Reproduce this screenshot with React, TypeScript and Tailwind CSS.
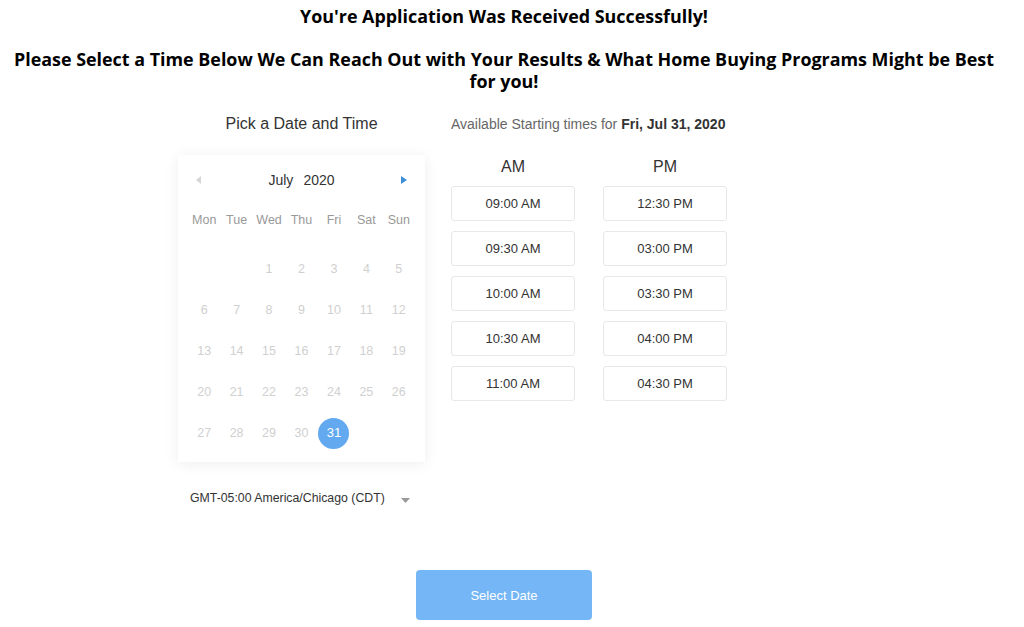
import React from "react";

const weekdays = ["Mon", "Tue", "Wed", "Thu", "Fri", "Sat", "Sun"];
const cells: (number | null)[] = [null, null, ...Array.from({ length: 31 }, (_, i) => i + 1)];
const am = ["09:00 AM", "09:30 AM", "10:00 AM", "10:30 AM", "11:00 AM"];
const pm = ["12:30 PM", "03:00 PM", "03:30 PM", "04:00 PM", "04:30 PM"];

export default function App() {
  const rows: (number | null)[][] = [];
  for (let i = 0; i < cells.length; i += 7) rows.push(cells.slice(i, i + 7));
  return (
    <div className="w-[1024px] h-[627px] bg-white overflow-hidden relative">
      <div
        className="text-center text-black font-bold text-[17.9px] leading-[22px] pr-[16px]"
        style={{ fontFamily: '"Open Sans", sans-serif' }}
      >
        <div className="pt-[5px]">You're Application Was Received Successfully!</div>
        <div className="mt-[21px]">
          Please Select a Time Below We Can Reach Out with Your Results &amp; What Home Buying Programs Might be Best
          <br />
          for you!
        </div>
      </div>

      <div
        className="flex ml-[178px] mt-[21px]"
        style={{ fontFamily: '"Liberation Sans", Arial, sans-serif' }}
      >
        {/* left column */}
        <div className="w-[247px] flex flex-col">
          <div className="text-center text-[16px] leading-[22px] text-[#333]">Pick a Date and Time</div>
          <div className="mt-[20px] h-[307px] bg-white shadow-[0_2px_14px_rgba(0,0,0,0.07)] px-[10px]">
            <div className="flex items-center justify-between h-[22px] mt-[14px] px-[8px]">
              <svg width="6" height="8" viewBox="0 0 6 8">
                <path d="M5 0 L0 4 L5 8 Z" fill="#d6d6d6" />
              </svg>
              <div className="text-[14px] text-[#333]">
                July<span className="ml-[10px]">2020</span>
              </div>
              <svg width="6" height="8" viewBox="0 0 6 8">
                <path d="M0 0 L6 4 L0 8 Z" fill="#3e8ed6" />
              </svg>
            </div>
            <div className="grid grid-cols-7 mt-[20px] text-[12.5px] text-[#999] h-[18px] items-center">
              {weekdays.map((d) => (
                <div key={d} className="text-center">{d}</div>
              ))}
            </div>
            <div className="mt-[24px] flex flex-col gap-[9px]">
              {rows.map((r, ri) => (
                <div key={ri} className="grid grid-cols-7 h-[32px] items-center">
                  {Array.from({ length: 7 }).map((_, ci) => {
                    const v = r[ci];
                    if (v == null) return <div key={ci} />;
                    if (v === 31)
                      return (
                        <div key={ci} className="flex justify-center">
                          <div className="w-[31px] h-[31px] rounded-full bg-[#62a9f0] text-white text-[13px] flex items-center justify-center">
                            31
                          </div>
                        </div>
                      );
                    return (
                      <div key={ci} className="text-center text-[12.5px] text-[#d0d0d0]">
                        {v}
                      </div>
                    );
                  })}
                </div>
              ))}
            </div>
          </div>
          <div className="mt-[26px] flex items-center pl-[12px] text-[12.3px] text-[#333] h-[20px]">
            <span>GMT-05:00 America/Chicago (CDT)</span>
            <svg className="ml-[16px] mt-[4px]" width="9" height="5" viewBox="0 0 9 5">
              <path d="M0 0 L9 0 L4.5 5 Z" fill="#999" />
            </svg>
          </div>
        </div>

        {/* right column */}
        <div className="ml-[26px] flex flex-col">
          <div className="text-[14px] leading-[22px] text-[#666]">
            Available Starting times for <span className="font-bold text-[#333]">Fri, Jul 31, 2020</span>
          </div>
          <div className="flex gap-[28px] mt-[22px]">
            {[{ label: "AM", list: am }, { label: "PM", list: pm }].map((col) => (
              <div key={col.label} className="w-[124px] flex flex-col">
                <div className="text-center text-[16px] leading-[20px] text-[#333]">{col.label}</div>
                <div className="mt-[9px] flex flex-col gap-[10px]">
                  {col.list.map((t) => (
                    <div
                      key={t}
                      className="h-[35px] border border-[#e8e8e8] rounded-[3px] flex items-center justify-center text-[13px] text-[#333]"
                    >
                      {t}
                    </div>
                  ))}
                </div>
              </div>
            ))}
          </div>
        </div>
      </div>

      <div className="flex ml-[416px] mt-[62px]" style={{ fontFamily: '"Liberation Sans", Arial, sans-serif' }}>
        <div className="w-[176px] h-[50px] rounded-[4px] bg-[#75b6f6] text-white text-[13px] flex items-center justify-center pt-[2px]">
          Select Date
        </div>
      </div>
    </div>
  );
}
